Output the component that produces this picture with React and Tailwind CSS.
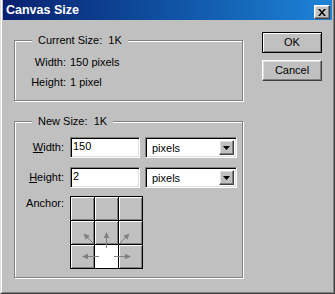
import React from "react";

const raised =
  "border border-t-white border-l-white border-r-[#404040] border-b-[#404040] shadow-[inset_-1px_-1px_0_#808080,inset_1px_1px_0_#dfdfdf]";
const sunken =
  "border border-t-[#808080] border-l-[#808080] border-r-white border-b-white shadow-[inset_1px_1px_0_#000,inset_-1px_-1px_0_#dfdfdf]";

// little gray arrow with filled head
function Arrow({ x1, y1, x2, y2 }) {
  const dx = x2 - x1;
  const dy = y2 - y1;
  const len = Math.hypot(dx, dy);
  const ux = dx / len;
  const uy = dy / len;
  const bx = x2 - ux * 6;
  const by = y2 - uy * 6;
  const nx = -uy * 2.8;
  const ny = ux * 2.8;
  return (
    <g>
      <line x1={x1} y1={y1} x2={bx} y2={by} stroke="#808080" strokeWidth="1" />
      <polygon
        points={`${x2},${y2} ${bx + nx},${by + ny} ${bx - nx},${by - ny}`}
        fill="#808080"
      />
    </g>
  );
}

function GroupBox({ title, className, children }) {
  return (
    <div
      className={`relative border border-[#808080] shadow-[1px_1px_0_#fff,inset_1px_1px_0_#fff] ${className}`}
    >
      <span className="absolute left-[17px] top-[-7px] bg-[#c0c0c0] px-[6px] leading-[13px] whitespace-pre">
        {title}
      </span>
      {children}
    </div>
  );
}

function Combo() {
  return (
    <div className={`ml-[5px] flex h-[21px] w-[92px] items-stretch bg-white p-[2px] ${sunken}`}>
      <span className="flex-1 pl-[4px] leading-[17px]">pixels</span>
      <div className={`flex w-[15px] items-center justify-center bg-[#c0c0c0] ${raised}`}>
        <svg width="7" height="4" viewBox="0 0 7 4">
          <path d="M0 0h7L3.5 4z" fill="#000" />
        </svg>
      </div>
    </div>
  );
}

export default function App() {
  const cells = [0, 1, 2, 3, 4, 5, 6, 7, 8];

  return (
    <div className="h-[294px] w-[335px] border-l border-r border-b border-l-[#dfdfdf] border-r-[#404040] border-b-[#404040] bg-[#c0c0c0] font-['Liberation_Sans',Arial,sans-serif] text-[11px] text-black">
      <div className="h-full border-l border-r border-b border-l-white border-r-[#808080] border-b-[#808080] px-[1px]">
        {/* Title bar */}
        <div className="flex h-[20px] items-start bg-linear-to-r from-[#0a2070] to-[#1e84d8]">
          <span className="flex-1 pl-[3px] pt-[3px] text-[12.5px] font-bold leading-[14px] text-white">
            Canvas Size
          </span>
          <div
            className={`mr-[2px] mt-[5px] flex h-[14px] w-[16px] items-center justify-center bg-[#c0c0c0] ${raised}`}
          >
            <svg width="8" height="7" viewBox="0 0 8 7">
              <path d="M0 0h2l2 2.5L6 0h2L5 3.5 8 7H6L4 4.5 2 7H0l3-3.5z" fill="#000" />
            </svg>
          </div>
        </div>

        <div className="flex">
          <div className="ml-[11px] flex flex-col">
            <GroupBox title="Current Size:  1K" className="mt-[20px] h-[61px] w-[229px]">
              <div className="flex flex-col gap-[7px] pt-[15px] leading-[13px]">
                <div className="flex">
                  <span className="w-[51px] text-right">Width:</span>
                  <span className="ml-[4px]">150 pixels</span>
                </div>
                <div className="flex">
                  <span className="w-[51px] text-right">Height:</span>
                  <span className="ml-[4px]">1 pixel</span>
                </div>
              </div>
            </GroupBox>

            <GroupBox title="New Size:  1K" className="mt-[20px] h-[157px] w-[229px]">
              <div className="flex flex-col pt-[15px]">
                <div className="flex items-center">
                  <span className="w-[49px] text-right">
                    <span className="underline">W</span>idth:
                  </span>
                  <div className={`ml-[6px] h-[21px] w-[70px] bg-white pl-[2px] leading-[17px] ${sunken}`}>
                    150
                  </div>
                  <Combo />
                </div>
                <div className="mt-[9px] flex items-center">
                  <span className="w-[49px] text-right">
                    <span className="underline">H</span>eight:
                  </span>
                  <div className={`ml-[6px] h-[21px] w-[70px] bg-white pl-[2px] leading-[17px] ${sunken}`}>
                    2
                  </div>
                  <Combo />
                </div>
                <div className="mt-[8px] flex items-start">
                  <span className="w-[49px] pt-[1px] text-right leading-[13px]">Anchor:</span>
                  <div className="relative ml-[6px] h-[73px] w-[73px]">
                    <div className="grid h-full w-full grid-cols-3 gap-[1px] bg-black p-[1px]">
                      {cells.map((i) =>
                        i === 7 ? (
                          <div key={i} className="bg-white" />
                        ) : (
                          <div
                            key={i}
                            className="bg-[#c0c0c0] shadow-[inset_1px_1px_0_#fff,inset_-1px_-1px_0_#808080]"
                          />
                        )
                      )}
                    </div>
                    <svg
                      className="pointer-events-none absolute left-0 top-0"
                      width="73"
                      height="73"
                      viewBox="0 0 73 73"
                    >
                      <Arrow x1={24.5} y1={48.5} x2={13.5} y2={37.5} />
                      <Arrow x1={36.5} y1={52} x2={36.5} y2={36} />
                      <Arrow x1={48.5} y1={48.5} x2={59.5} y2={37.5} />
                      <Arrow x1={29} y1={60.5} x2={12} y2={60.5} />
                      <Arrow x1={44} y1={60.5} x2={61} y2={60.5} />
                    </svg>
                  </div>
                </div>
              </div>
            </GroupBox>
          </div>

          {/* Buttons */}
          <div className="ml-[19px] flex flex-col">
            <button className="mt-[12px] h-[21px] w-[60px] border border-black bg-[#c0c0c0] leading-[17px] shadow-[inset_1px_1px_0_#fff,inset_-1px_-1px_0_#808080]">
              OK
            </button>
            <button className={`mt-[7px] h-[21px] w-[60px] bg-[#c0c0c0] leading-[17px] ${raised}`}>
              Cancel
            </button>
          </div>
        </div>
      </div>
    </div>
  );
}
